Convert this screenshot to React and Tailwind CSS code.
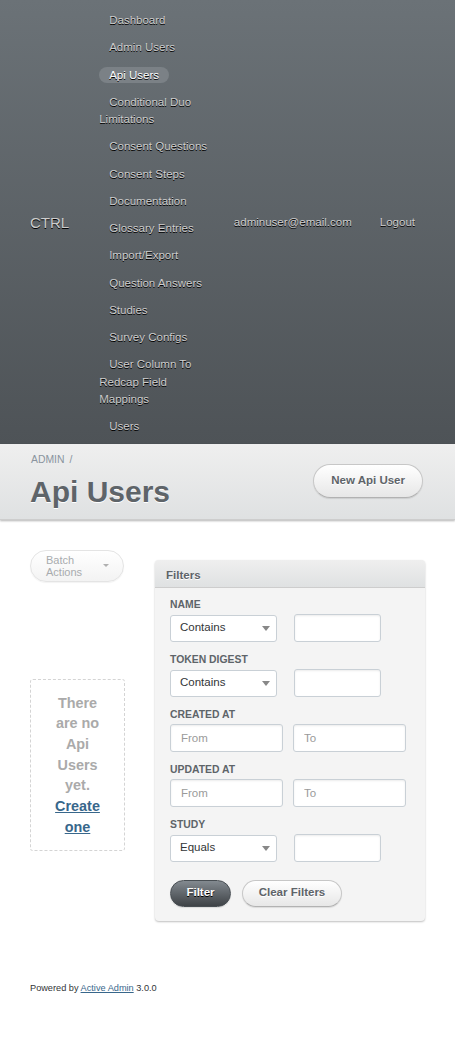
import React from "react";

const tabs = [
  "Dashboard",
  "Admin Users",
  "Api Users",
  "Conditional Duo Limitations",
  "Consent Questions",
  "Consent Steps",
  "Documentation",
  "Glossary Entries",
  "Import/Export",
  "Question Answers",
  "Studies",
  "Survey Configs",
  "User Column To Redcap Field Mappings",
  "Users",
];

function Caret({ color = "#8a8a8a", small }) {
  return (
    <span
      className={`inline-block w-0 h-0 border-x-transparent ${
        small ? "border-x-[3px] border-t-[3px]" : "border-x-[4px] border-t-[5px]"
      }`}
      style={{ borderTopColor: color }}
    />
  );
}

function FakeSelect({ value }) {
  return (
    <div className="w-[107px] h-[27px] flex items-center justify-between pl-[9px] pr-[6px] bg-white border border-[#c9d0d6] rounded-[3px] text-[11.5px] text-[#323537]">
      <span>{value}</span>
      <Caret color="#888" />
    </div>
  );
}

function TextInput({ w = "w-[87px]", placeholder }) {
  return (
    <input
      type="text"
      placeholder={placeholder}
      className={`${w} h-[28px] px-[10px] bg-white border border-[#c9d0d6] rounded-[3px] text-[11.5px] text-[#323537] placeholder:text-[#9a9a9a] shadow-[inset_0_1px_2px_rgba(0,0,0,0.08)] outline-none`}
    />
  );
}

function Label({ children }) {
  return (
    <div className="text-[10.4px] leading-[12px] font-bold uppercase text-[#5e6469] mb-[3px]">
      {children}
    </div>
  );
}

function SelectFilter({ label, op }) {
  return (
    <div className="mb-[12px]">
      <Label>{label}</Label>
      <div className="flex items-end gap-[17px]">
        <FakeSelect value={op} />
        <TextInput />
      </div>
    </div>
  );
}

function DateFilter({ label }) {
  return (
    <div className="mb-[12px]">
      <Label>{label}</Label>
      <div className="flex gap-[10px]">
        <TextInput w="w-[113px]" placeholder="From" />
        <TextInput w="w-[113px]" placeholder="To" />
      </div>
    </div>
  );
}

export default function App() {
  return (
    <div className="min-h-[1039px] bg-white font-['Liberation_Sans',Arial,sans-serif] text-[11.52px] text-[#323537]">
      {/* Header */}
      <div className="flex items-center px-[30px] bg-gradient-to-b from-[#6b7277] to-[#4e5357] text-[#cdcdcd] [text-shadow:#000_0_1px_0]">
        <h1 className="text-[15px] font-normal mr-[30px] pt-[2px]">CTRL</h1>
        <ul className="w-[122px] pt-[7px] pb-[3px] leading-[1.5]">
          {tabs.map((t) => (
            <li key={t} className="py-[5px]">
              <span
                className={`px-[10px] py-[2px] rounded-full ${
                  t === "Api Users" ? "bg-[#7b8186] text-white" : ""
                }`}
              >
                {t}
              </span>
            </li>
          ))}
        </ul>
        <ul className="ml-auto flex gap-[8px] pt-[2px]">
          <li className="px-[10px]">adminuser@email.com</li>
          <li className="px-[10px]">Logout</li>
        </ul>
      </div>

      {/* Title bar */}
      <div className="flex items-center justify-between pl-[30px] pr-[32px] pt-[8px] pb-[9px] bg-gradient-to-b from-[#efefef] to-[#dfe1e2] border-b border-[#cdcdcd] shadow-[0_1px_2px_rgba(0,0,0,0.3)]">
        <div>
          <div className="pl-[1px] text-[10.4px] leading-[15px] text-[#8a949e]">
            ADMIN <span className="ml-[2px]">/</span>
          </div>
          <h2 className="mt-[7px] text-[30px] leading-[36px] font-bold text-[#5e6469] [text-shadow:#fff_0_1px_0]">
            Api Users
          </h2>
        </div>
        <button className="h-[34px] px-[17px] rounded-full border border-[#c7c7c7] border-b-[#b2b2b2] bg-gradient-to-b from-white to-[#e7e7e7] shadow-[0_1px_1px_rgba(0,0,0,0.1)] text-[11.52px] font-bold text-[#5e6469] [text-shadow:#fff_0_1px_0]">
          New Api User
        </button>
      </div>

      {/* Content */}
      <div className="flex gap-[30px] px-[30px] pt-[30px] pb-[30px]">
        <div className="flex-1 min-w-0">
          <div className="w-[94px] h-[32px] flex items-center justify-between pl-[15px] pr-[14px] rounded-full border border-[#e4e4e4] bg-gradient-to-b from-white to-[#f3f3f3] shadow-[0_1px_1px_rgba(0,0,0,0.05)] text-[#a8abae] text-[11px] leading-[12px]">
            <span>
              Batch
              <br />
              Actions
            </span>
            <Caret color="#b0b0b0" small />
          </div>

          <div className="mt-[97px] border border-dashed border-[#d4d4d4] rounded-[3px] px-[16px] py-[13px] text-center text-[14.4px] leading-[20.7px] font-bold text-[#aaa]">
            There are no Api Users yet.{" "}
            <a href="#" className="text-[#38678b] underline">
              Create one
            </a>
          </div>
        </div>

        <div className="w-[270px] shrink-0 mt-[10px] rounded-[4px] bg-[#f4f4f4] shadow-[0_1px_2px_rgba(0,0,0,0.25)]">
          <h3 className="pt-[9px] pb-[5px] leading-[13px] px-[11px] rounded-t-[4px] bg-gradient-to-b from-[#efefef] to-[#dfe1e2] border-b border-[#cdcdcd] text-[11.52px] font-bold text-[#5e6469] [text-shadow:#fff_0_1px_0]">
            Filters
          </h3>
          <div className="px-[15px] pt-[11px] pb-[14px]">
            <SelectFilter label="Name" op="Contains" />
            <SelectFilter label="Token Digest" op="Contains" />
            <DateFilter label="Created At" />
            <DateFilter label="Updated At" />
            <div>
              <Label>Study</Label>
              <div className="flex items-end gap-[17px]">
                <FakeSelect value="Equals" />
                <TextInput />
              </div>
            </div>
            <div className="flex gap-[11px] mt-[18px]">
              <button className="w-[61px] h-[27px] rounded-full border border-[#484e53] bg-gradient-to-b from-[#838a90] to-[#3f4347] text-white font-bold text-[11.52px] [text-shadow:#000_0_1px_0] shadow-[0_1px_1px_rgba(0,0,0,0.1)]">
                Filter
              </button>
              <button className="w-[100px] h-[27px] rounded-full border border-[#c7c7c7] border-b-[#b2b2b2] bg-gradient-to-b from-white to-[#e7e7e7] text-[#5e6469] font-bold text-[11.52px] [text-shadow:#fff_0_1px_0] shadow-[0_1px_1px_rgba(0,0,0,0.1)]">
                Clear Filters
              </button>
            </div>
          </div>
        </div>
      </div>

      {/* Footer */}
      <div className="px-[30px] pt-[31px] pb-[30px] text-[9.2px] leading-[1.5] text-[#323537]">
        Powered by{" "}
        <a href="#" className="text-[#38678b] underline">
          Active Admin
        </a>{" "}
        3.0.0
      </div>
    </div>
  );
}
